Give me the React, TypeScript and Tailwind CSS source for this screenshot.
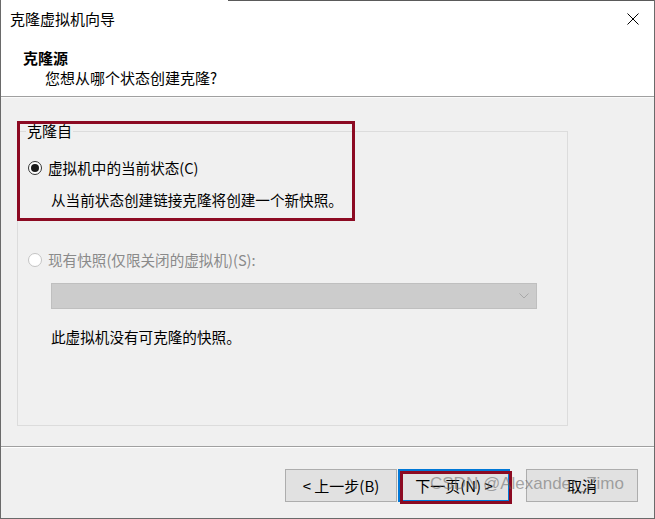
import React from "react";

const Radio = ({ checked, disabled }: { checked?: boolean; disabled?: boolean }) => (
  <span
    className={
      "flex h-[14px] w-[14px] shrink-0 items-center justify-center rounded-full border " +
      (disabled ? "border-[#c4c4c4] bg-white" : "border-[#333333] bg-white")
    }
  >
    {checked && <span className="h-[8px] w-[8px] rounded-full bg-[#1a1a1a]" />}
  </span>
);

const WizardButton = ({ label, focused }: { label: string; focused?: boolean }) => (
  <div
    className={
      "relative flex h-[33px] w-[112px] items-center justify-center bg-[#e1e1e1] text-[15px] leading-[20px] " +
      (focused ? "border-2 border-[#0078d7]" : "border border-[#adadad]")
    }
  >
    {label}
    {focused && (
      <div className="absolute left-[0px] top-[0px] h-[33px] w-[112px] border-[3px] border-[#8c0a22]" />
    )}
  </div>
);

export default function App() {
  return (
    <div className="relative flex h-[519px] w-[655px] flex-col border-x border-b border-[#6a6a6a] bg-[#f0f0f0] font-['Microsoft_YaHei_UI','Noto_Sans_CJK_SC',sans-serif] text-black">
      {/* top edge of the window */}
      <div className="flex h-px shrink-0">
        <div className="w-[227px] bg-white" />
        <div className="flex-1 bg-[#5a5a5a]" />
      </div>

      {/* header */}
      <div className="flex h-[96px] shrink-0 flex-col border-b border-[#a0a0a0] bg-white">
        <div className="flex items-center justify-between pl-[9px] pr-[15px] pt-[8px]">
          <span className="text-[15px] leading-[20px]">克隆虚拟机向导</span>
          <svg width="12" height="12" viewBox="0 0 12 12" className="shrink-0">
            <path d="M0.5 0.5 L11.5 11.5 M11.5 0.5 L0.5 11.5" stroke="#000" strokeWidth="1" fill="none" />
          </svg>
        </div>
        <div className="mt-[19px] pl-[22px] text-[15px] font-bold leading-[20px]">克隆源</div>
        <div className="pl-[44px] text-[15px] leading-[20px]">您想从哪个状态创建克隆?</div>
      </div>

      {/* body */}
      <div className="h-[349px] shrink-0 border-t border-[#fafafa]">
        <div className="relative mt-[23px]">
          <fieldset className="ml-[16px] h-[305px] w-[551px] border border-[#dcdcdc]">
            <legend className="ml-[8px] px-[1px] text-[15px] leading-[20px]">克隆自</legend>

            <div className="flex flex-col pl-[10px]">
              <div className="mt-[17px] flex h-[20px] items-center gap-[6px] text-[14.6px] leading-[20px]">
                <Radio checked />
                <span>虚拟机中的当前状态(C)</span>
              </div>
              <div className="mt-[12px] pl-[23px] text-[14.6px] leading-[20px]">从当前状态创建链接克隆将创建一个新快照。</div>

              <div className="mt-[40px] flex h-[20px] items-center gap-[6px] text-[14.6px] leading-[20px] text-[#8a8a8a]">
                <Radio disabled />
                <span>现有快照(仅限关闭的虚拟机)(S):</span>
              </div>
              <div className="ml-[23px] mt-[13px] flex h-[26px] w-[486px] items-center justify-end border border-[#bfbfbf] bg-[#cccccc] pr-[7px]">
                <svg width="10" height="6" viewBox="0 0 10 6">
                  <path d="M0.5 0.5 L5 5 L9.5 0.5" stroke="#a8a8a8" strokeWidth="1" fill="none" />
                </svg>
              </div>
              <div className="mt-[18px] pl-[23px] text-[14.6px] leading-[20px]">此虚拟机没有可克隆的快照。</div>
            </div>
          </fieldset>

          {/* annotation box */}
          <div className="absolute left-[16px] top-[0px] h-[100px] w-[338px] border-[3px] border-[#8c0a22]" />
        </div>
      </div>

      {/* footer */}
      <div className="flex-1 border-t border-[#a0a0a0]">
        <div className="h-full border-t border-white">
          <div className="mt-[21px] flex justify-end pr-[16px]">
            <div className="flex gap-[1px]">
              <WizardButton label="< 上一步(B)" />
              <WizardButton label="下一页(N) >" focused />
            </div>
            <div className="ml-[16px]">
              <WizardButton label="取消" />
            </div>
          </div>
        </div>
      </div>

      {/* watermark */}
      <div className="pointer-events-none absolute left-[429px] top-[474px] font-['Liberation_Sans',sans-serif] text-[17px] leading-[20px] text-[rgba(100,100,100,0.55)]">
        CSDN @Alexander_Zimo
      </div>
    </div>
  );
}
